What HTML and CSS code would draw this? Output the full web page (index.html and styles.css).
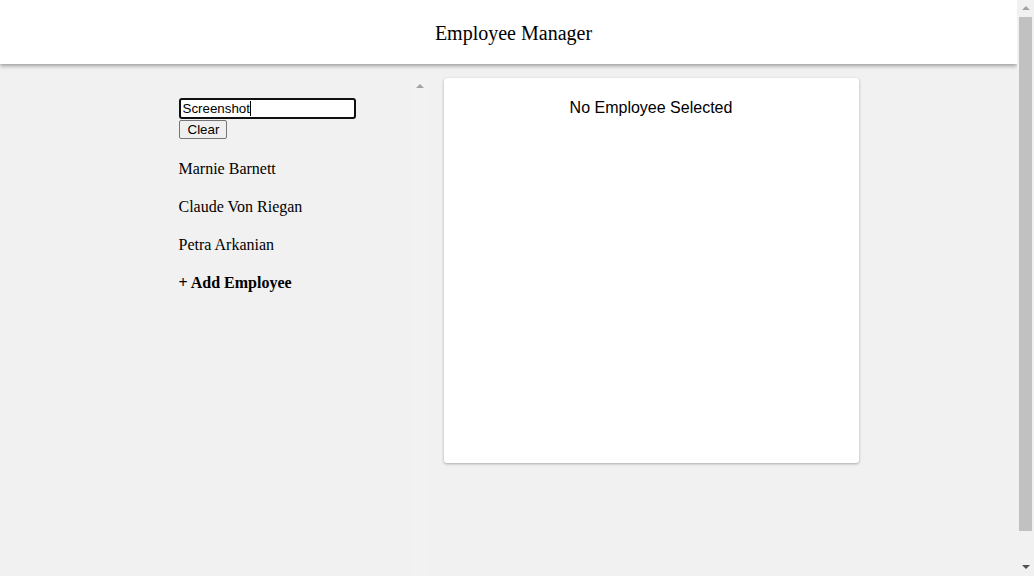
FILE: index.html
```html
<!DOCTYPE html>
<html lang="en">
<head>
<meta charset="utf-8">
<title>Employee Manager</title>
<link rel="stylesheet" href="styles.css">
</head>
<body>
<header class="app-header">
  <h1 class="app-title">Employee Manager</h1>
</header>
<main class="layout">
  <aside class="sidebar">
    <div class="sidebar-content">
      <div class="search">
        <span class="search-field">
          <input class="search-input" type="text" value="Screenshot">
          <span class="caret"></span>
        </span>
        <button class="clear-btn" type="button">Clear</button>
      </div>
      <ul class="employee-list">
        <li class="employee-item">Marnie Barnett</li>
        <li class="employee-item">Claude Von Riegan</li>
        <li class="employee-item">Petra Arkanian</li>
        <li class="employee-item add-item">+ Add Employee</li>
      </ul>
    </div>
    <div class="sidebar-track">
      <span class="arrow-up arrow-light"></span>
    </div>
  </aside>
  <section class="detail-card">
    <p class="empty-msg">No Employee Selected</p>
  </section>
</main>
<div class="page-scrollbar">
  <span class="arrow-up arrow-light"></span>
  <span class="page-thumb"></span>
  <span class="arrow-down"></span>
</div>
</body>
</html>
```

FILE: styles.css
```css
html, body {
  margin: 0;
  padding: 0;
}
body {
  background: #f1f1f1;
  font-family: "Liberation Serif", "Times New Roman", serif;
  color: #000;
  margin-right: 17px;
}
.app-header {
  height: 64px;
  background: #fff;
  box-shadow: 0 2px 4px rgba(0, 0, 0, 0.35);
  display: flex;
  align-items: center;
  justify-content: center;
  position: relative;
  z-index: 1;
}
.app-title {
  margin: 0;
  padding-left: 10px;
  padding-top: 2px;
  font-size: 20px;
  font-weight: normal;
  line-height: 24px;
}
.layout {
  max-width: 700px;
  margin: 0 auto;
  display: flex;
  gap: 15px;
  padding-top: 14px;
  padding-bottom: 17px;
}
.sidebar {
  width: 270px;
  flex: 0 0 270px;
  height: calc(100vh - 64px);
  display: flex;
}
.sidebar-content {
  flex: 1;
  padding: 20px 0 0 20px;
}
.sidebar-track {
  width: 17px;
  flex: 0 0 17px;
  background: #f2f2f2;
  display: flex;
  flex-direction: column;
  align-items: center;
  padding-top: 6px;
  box-sizing: border-box;
}
.search {
  display: flex;
  flex-direction: column;
  align-items: flex-start;
  gap: 1px;
}
.search-field {
  position: relative;
  display: block;
}
.search-input {
  display: block;
  width: 177px;
  height: 21px;
  box-sizing: border-box;
  border: 2px solid #101010;
  border-radius: 3px;
  padding: 1px 2px;
  font-family: "Liberation Sans", Arial, sans-serif;
  font-size: 13.333px;
  color: #000;
  background: #fff;
  outline: none;
}
.caret {
  position: absolute;
  left: 71px;
  top: 3px;
  width: 1px;
  height: 15px;
  background: #000;
}
.clear-btn {
  font-family: "Liberation Sans", Arial, sans-serif;
  font-size: 13.333px;
  line-height: 15px;
  padding: 0 7px 1px 8px;
  border: 1px solid #767676;
  border-radius: 2px;
  background: #efefef;
  color: #000;
  height: 19px;
  box-sizing: border-box;
}
.employee-list {
  list-style: none;
  margin: 11px 0 0;
  padding: 0;
}
.employee-item {
  font-size: 16px;
  line-height: 18px;
  padding: 10px 0;
}
.add-item {
  font-weight: bold;
}
.detail-card {
  width: 415px;
  height: 385px;
  box-sizing: border-box;
  background: #fff;
  border-radius: 3px;
  box-shadow: 0 1px 3px rgba(0, 0, 0, 0.3);
  padding: 21px 20px 20px;
  text-align: center;
  align-self: flex-start;
}
.empty-msg {
  margin: 0;
  font-family: "Liberation Sans", Arial, sans-serif;
  font-size: 16px;
  line-height: 18px;
}
.page-scrollbar {
  position: fixed;
  top: 0;
  right: 0;
  bottom: 0;
  width: 17px;
  background: #f1f1f1;
  display: flex;
  flex-direction: column;
  align-items: center;
  z-index: 2;
}
.arrow-up {
  width: 0;
  height: 0;
  border-left: 4px solid transparent;
  border-right: 4px solid transparent;
  border-bottom: 4px solid #a3a3a3;
}
.page-scrollbar .arrow-up {
  margin-top: 6px;
}
.page-thumb {
  margin-top: 7px;
  width: 13px;
  height: 514px;
  background: #c1c1c1;
}
.arrow-down {
  margin-top: auto;
  margin-bottom: 7px;
  width: 0;
  height: 0;
  border-left: 4px solid transparent;
  border-right: 4px solid transparent;
  border-top: 4px solid #505050;
}
```
